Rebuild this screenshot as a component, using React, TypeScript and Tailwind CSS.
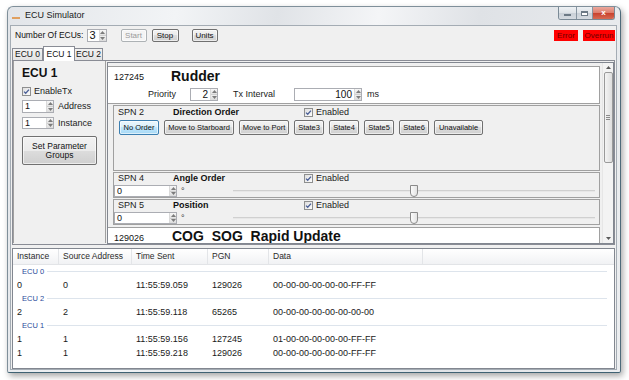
import React from "react";

const FONT = "font-['Liberation_Sans',Arial,sans-serif]";

function Arrow({ down }: { down?: boolean }) {
  return (
    <svg width="5" height="3" viewBox="0 0 5 3">
      <path d={down ? "M0 0L2.5 3L5 0Z" : "M0 3L2.5 0L5 3Z"} fill="#7c7c7c" />
    </svg>
  );
}

function Spin({
  value,
  box,
  right,
  text = "text-[9px]",
}: {
  value: string;
  box: string;
  right?: boolean;
  text?: string;
}) {
  return (
    <div className={`flex bg-white border border-[#abadb3] ${box}`}>
      <div
        className={`flex-1 flex items-center px-[2px] leading-none text-[#111] ${
          right ? "justify-end" : ""
        } ${text}`}
      >
        {value}
      </div>
      <div className="flex flex-col w-[7px] border-l border-[#dadada]">
        <div className="flex-1 flex items-center justify-center bg-[linear-gradient(#f7f7f7,#e3e3e3)] border-b border-[#cfcfcf]">
          <Arrow />
        </div>
        <div className="flex-1 flex items-center justify-center bg-[linear-gradient(#efefef,#dcdcdc)]">
          <Arrow down />
        </div>
      </div>
    </div>
  );
}

function Btn({
  children,
  className = "",
  blue,
  disabled,
}: {
  children: React.ReactNode;
  className?: string;
  blue?: boolean;
  disabled?: boolean;
}) {
  const skin = disabled
    ? "border-[#adb2b5] bg-[#f4f4f4] text-[#9a9a9a]"
    : blue
    ? "border-[#3c7fb1] bg-[linear-gradient(#eaf6fd_0%,#d9f0fc_50%,#bee6fd_50%,#a7d9f5_100%)] text-[#111]"
    : "border-[#707070] bg-[linear-gradient(#f2f2f2_0%,#ebebeb_50%,#dddddd_50%,#cfcfcf_100%)] text-[#111]";
  return (
    <div
      className={`flex items-center justify-center border rounded-[2px] leading-none shadow-[inset_0_0_0_1px_rgba(255,255,255,0.6)] ${skin} ${className}`}
    >
      {children}
    </div>
  );
}

function Check() {
  return (
    <svg width="9" height="9" viewBox="0 0 9 9">
      <defs>
        <linearGradient id="cb" x1="0" y1="0" x2="1" y2="1">
          <stop offset="0" stopColor="#dcdcdc" />
          <stop offset="1" stopColor="#ffffff" />
        </linearGradient>
      </defs>
      <rect x="0.5" y="0.5" width="8" height="8" fill="url(#cb)" stroke="#8e8f8f" />
      <path d="M2 4.6L3.7 6.3L7 2.6" fill="none" stroke="#4a5f97" strokeWidth="1.3" />
    </svg>
  );
}

function Slider() {
  return (
    <div className="relative h-[12px] w-[362px]">
      <div className="absolute left-0 right-0 top-[5px] h-[2px] bg-[#e7e7e7] border-t border-[#d0d0d0]" />
      <svg className="absolute left-[177px] top-0" width="8" height="12" viewBox="0 0 8 12">
        <defs>
          <linearGradient id="th" x1="0" y1="0" x2="1" y2="0">
            <stop offset="0" stopColor="#fdfdfd" />
            <stop offset="1" stopColor="#e2e2e2" />
          </linearGradient>
        </defs>
        <path
          d="M0.5 0.5H7.5V8Q7.5 11.5 4 11.5Q0.5 11.5 0.5 8Z"
          fill="url(#th)"
          stroke="#8a8a8a"
        />
      </svg>
    </div>
  );
}

function SpnHead({ spn, name }: { spn: string; name: string }) {
  return (
    <div className="flex items-center h-[11px] pl-[4px] text-[9px] leading-none">
      <span className="w-[55px] text-[#222]">{spn}</span>
      <span className="w-[131px] font-bold text-[#111]">{name}</span>
      <Check />
      <span className="ml-[3px] text-[#222]">Enabled</span>
    </div>
  );
}

function SpnValue({ spn, name }: { spn: string; name: string }) {
  return (
    <div className="mt-px w-[487px] h-[26px] border border-[#a0a0a0]">
      <SpnHead spn={spn} name={name} />
      <div className="flex items-center mt-[1px]">
        <Spin value="0" box="w-[63px] h-[12px]" />
        <span className="ml-[4px] text-[9px] leading-none text-[#333]">°</span>
        <div className="ml-auto mr-[4px]">
          <Slider />
        </div>
      </div>
    </div>
  );
}

function Group({ name }: { name: string }) {
  return (
    <div className="flex items-center h-[13px] pl-[9px] pr-[7px]">
      <span className="text-[7.5px] leading-none text-[#2a4a9a]">{name}</span>
      <div className="flex-1 h-px bg-[#dde4ec] ml-[3px]" />
    </div>
  );
}

function Row({ cells }: { cells: string[] }) {
  const w = ["w-[46px]", "w-[73px]", "w-[76px]", "w-[61px]", "w-[200px]"];
  return (
    <div className="flex items-center h-[14px] text-[9px] leading-none text-[#1a1a1a]">
      {cells.map((c, i) => (
        <div key={i} className={`${w[i]} pl-[4px]`}>
          {c}
        </div>
      ))}
    </div>
  );
}

export default function App() {
  const buttons = [
    "Move to Starboard",
    "Move to Port",
    "State3",
    "State4",
    "State5",
    "State6",
    "Unavailable",
  ];
  const heads = [
    ["Instance", "w-[46px]"],
    ["Source Address", "w-[73px]"],
    ["Time Sent", "w-[76px]"],
    ["PGN", "w-[61px]"],
    ["Data", "w-[154px]"],
  ];

  return (
    <div className={`w-[629px] h-[380px] bg-white pt-[6px] pl-[7px] ${FONT}`}>
      <div className="w-[614px] h-[367px] flex flex-col rounded-t-[6px] rounded-b-[2px] border border-[#7f8f9a] border-b-[#3f6273] border-r-[#4d6b7a] bg-[linear-gradient(100deg,#e2e5e9_0%,#f2f4f6_25%,#e0e3e7_40%,#f4f5f7_55%,#dfe2e6_70%,#eceef0_100%)] shadow-[2px_3px_6px_rgba(0,0,0,0.35)]">
        {/* title bar */}
        <div className="h-[18px] flex items-start">
          <svg className="ml-[4px] mt-[9px]" width="8" height="4" viewBox="0 0 8 4">
            <rect x="0" y="1" width="8" height="2" fill="#e0a060" />
          </svg>
          <span className="ml-[5px] mt-[4px] text-[9px] leading-none text-[#1a1a1a]">
            ECU Simulator
          </span>
          <div className="ml-auto mr-[5px] flex h-[13px] rounded-b-[3px] border border-t-0 border-[#7a8a96] overflow-hidden">
            <div className="w-[18px] flex items-center justify-center bg-[linear-gradient(#eef1f4_0%,#dde2e7_50%,#c9d0d7_50%,#d5dbe1_100%)] border-r border-[#8795a1]">
              <div className="w-[7px] h-[2px] mt-[4px] bg-white border border-[#6c7a86]" />
            </div>
            <div className="w-[16px] flex items-center justify-center bg-[linear-gradient(#eef1f4_0%,#dde2e7_50%,#c9d0d7_50%,#d5dbe1_100%)] border-r border-[#8795a1]">
              <div className="w-[7px] h-[5px] border border-[#6c7a86] border-t-2 bg-white" />
            </div>
            <div className="w-[21px] flex items-center justify-center bg-[linear-gradient(#eba99d_0%,#de7c6a_50%,#c8402c_50%,#d66a52_100%)]">
              <span className="text-[8px] font-bold leading-none text-white">x</span>
            </div>
          </div>
        </div>

        {/* client */}
        <div className="ml-[2px] mr-[3px] h-[345px] border border-[#a4acb4] bg-[#f0f0f0] flex flex-col">
          {/* toolbar */}
          <div className="h-[19px] flex items-center pl-[4px] pr-[1px] text-[8px] leading-none">
            <span className="text-[#111] text-[8.5px]">Number Of ECUs:</span>
            <Spin value="3" box="ml-[3px] w-[20px] h-[13px]" text="text-[11px]" />
            <Btn disabled className="ml-[14px] w-[26px] h-[13px] text-[8px]">
              Start
            </Btn>
            <Btn className="ml-[5px] w-[27px] h-[13px] text-[8px]">Stop</Btn>
            <Btn className="ml-[13px] w-[26px] h-[13px] text-[8px]">Units</Btn>
            <div className="ml-auto w-[24px] h-[11px] bg-[#ff0000] flex items-center justify-center text-[8px] text-[#6e0000]">
              Error
            </div>
            <div className="ml-[5px] w-[32px] h-[11px] bg-[#ff0000] flex items-center justify-center text-[8px] text-[#6e0000]">
              Overrun
            </div>
          </div>

          {/* tabs */}
          <div className="h-[15px] flex items-end pl-[1px] text-[8.5px] leading-none">
            <div className="w-[31px] h-[12px] flex items-center justify-center border border-b-0 border-[#898c95] bg-[linear-gradient(#f2f2f2,#e3e3e3)] text-[#111]">
              ECU 0
            </div>
            <div className="w-[32px] h-[15px] -mb-px flex items-center justify-center border border-b-0 border-[#898c95] bg-white text-[#111] relative z-10">
              ECU 1
            </div>
            <div className="w-[28px] h-[12px] flex items-center justify-center border border-b-0 border-l-0 border-[#898c95] bg-[linear-gradient(#f2f2f2,#e3e3e3)] text-[#111]">
              ECU 2
            </div>
          </div>

          {/* tab page */}
          <div className="mx-px h-[185px] border border-[#898c95] bg-[#f0f0f0] flex gap-px pt-0 pb-px">
            {/* sidebar */}
            <div className="w-[93px] h-full border-x border-[#a0a0a0] pl-[8px] pt-[5px] flex flex-col">
              <div className="h-[14px] text-[12px] font-bold leading-none flex items-center text-[#111]">
                ECU 1
              </div>
              <div className="mt-[6px] h-[11px] flex items-center text-[9px] leading-none text-[#222]">
                <Check />
                <span className="ml-[3px]">EnableTx</span>
              </div>
              <div className="mt-[3px] flex items-center text-[9px] leading-none text-[#222]">
                <Spin value="1" box="w-[32px] h-[13px]" />
                <span className="ml-[4px]">Address</span>
              </div>
              <div className="mt-[4px] flex items-center text-[9px] leading-none text-[#222]">
                <Spin value="1" box="w-[32px] h-[12px]" />
                <span className="ml-[4px]">Instance</span>
              </div>
              <Btn className="mt-[7px] w-[75px] h-[29px] text-[8.5px] text-center leading-[11px]">
                Set Parameter
                <br />
                Groups
              </Btn>
            </div>

            {/* parameter groups panel */}
            <div className="mt-px w-[507px] h-[182px] border border-[#828790] flex">
              <div className="w-[494px] h-full overflow-hidden">
                <div className="mt-[3px] w-[492px] h-[38px] bg-white border border-[#a0a0a0] border-l-0">
                  <div className="h-[18px] flex items-center pl-[6px] leading-none">
                    <span className="w-[57px] text-[9px] text-[#111] mt-[2px]">127245</span>
                    <span className="text-[14px] font-bold text-[#111]">Rudder</span>
                  </div>
                  <div className="flex items-center mt-[3px] text-[9px] leading-none text-[#222]">
                    <span className="ml-[40px] w-[42px]">Priority</span>
                    <Spin value="2" right box="w-[28px] h-[13px]" text="text-[10px]" />
                    <span className="ml-[15px] w-[61px]">Tx Interval</span>
                    <Spin value="100" right box="w-[68px] h-[13px]" text="text-[10px]" />
                    <span className="ml-[5px]">ms</span>
                  </div>
                </div>

                <div className="ml-[5px] mt-px w-[487px] h-[66px] border border-[#a0a0a0] pt-[1px]">
                  <SpnHead spn="SPN 2" name="Direction Order" />
                  <div className="flex mt-[2px] ml-[5px] gap-[5px] text-[7.5px] whitespace-nowrap">
                    <Btn blue className="w-[40px] h-[15px]">
                      No Order
                    </Btn>
                    {buttons.map((b) => (
                      <Btn
                        key={b}
                        className={`h-[15px] ${
                          b === "Move to Starboard"
                            ? "w-[70px]"
                            : b === "Move to Port"
                            ? "w-[50px]"
                            : b === "Unavailable"
                            ? "w-[49px]"
                            : "w-[30px]"
                        }`}
                      >
                        {b}
                      </Btn>
                    ))}
                  </div>
                </div>

                <div className="ml-[5px]">
                  <SpnValue spn="SPN 4" name="Angle Order" />
                  <SpnValue spn="SPN 5" name="Position" />
                </div>

                <div className="mt-[2px] w-[492px] h-[38px] bg-white border border-[#a0a0a0] border-l-0">
                  <div className="h-[15px] flex items-end pl-[6px] leading-none">
                    <span className="w-[58px] text-[9px] text-[#111]">129026</span>
                    <span className="text-[14px] font-bold text-[#111] whitespace-pre">
                      COG  SOG  Rapid Update
                    </span>
                  </div>
                </div>
              </div>

              {/* scrollbar */}
              <div className="w-[11px] h-full bg-[#f3f3f3] border-l border-[#e6e6e6] flex flex-col items-center">
                <div className="h-[9px] flex items-center justify-center">
                  <svg width="5" height="3" viewBox="0 0 5 3">
                    <path d="M0 3L2.5 0L5 3Z" fill="#5a5a5a" />
                  </svg>
                </div>
                <div className="w-[9px] h-[91px] rounded-[2px] border border-[#9a9a9a] bg-[linear-gradient(90deg,#f4f4f4,#dedede)] flex flex-col items-center justify-center gap-px">
                  <div className="w-[4px] h-px bg-[#8a8a8a]" />
                  <div className="w-[4px] h-px bg-[#8a8a8a]" />
                  <div className="w-[4px] h-px bg-[#8a8a8a]" />
                </div>
                <div className="mt-auto h-[9px] flex items-center justify-center">
                  <svg width="5" height="3" viewBox="0 0 5 3">
                    <path d="M0 0L2.5 3L5 0Z" fill="#5a5a5a" />
                  </svg>
                </div>
              </div>
            </div>
          </div>

          {/* list view */}
          <div className="mt-[3px] mx-px h-[121px] border border-[#828790] bg-white">
            <div className="h-[16px] flex items-center bg-[linear-gradient(#ffffff,#f1f2f4)] border-b border-[#e2e4e7] text-[8.5px] leading-none text-[#2a2a2a]">
              {heads.map(([h, w]) => (
                <div key={h} className={`${w} h-full flex items-center pl-[4px] border-r border-[#e3e5e8]`}>
                  {h}
                </div>
              ))}
            </div>
            <Group name="ECU 0" />
            <Row cells={["0", "0", "11:55:59.059", "129026", "00-00-00-00-00-00-FF-FF"]} />
            <Group name="ECU 2" />
            <Row cells={["2", "2", "11:55:59.118", "65265", "00-00-00-00-00-00-00-00"]} />
            <Group name="ECU 1" />
            <Row cells={["1", "1", "11:55:59.156", "127245", "01-00-00-00-00-00-FF-FF"]} />
            <Row cells={["1", "1", "11:55:59.218", "129026", "00-00-00-00-00-00-FF-FF"]} />
          </div>
        </div>
      </div>
    </div>
  );
}
